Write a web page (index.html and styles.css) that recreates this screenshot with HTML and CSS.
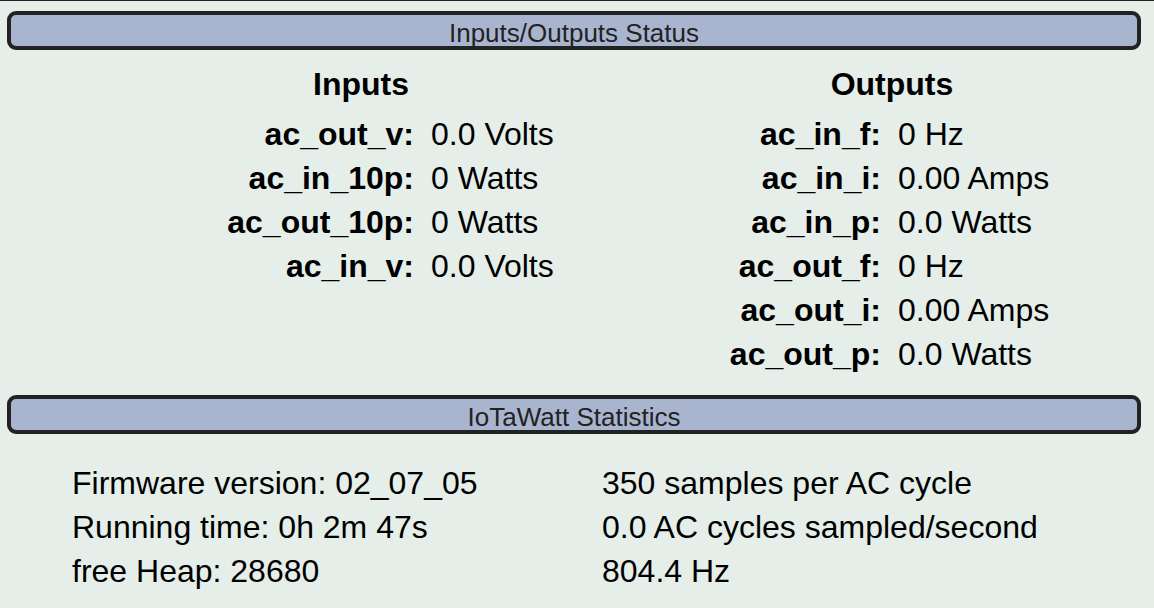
FILE: index.html
```html
<!DOCTYPE html>
<html lang="en">
<head>
  <meta charset="UTF-8">
  <title>IoTaWatt Status</title>
  <link rel="stylesheet" href="styles.css">
</head>
<body>
  <div class="bar">Inputs/Outputs Status</div>
  <div class="io">
    <div class="io-head io-head-in">Inputs</div>
    <div class="io-head io-head-out">Outputs</div>

    <div class="label c1">ac_out_v:</div><div class="value c2">0.0 Volts</div>
    <div class="label c3">ac_in_f:</div><div class="value c4">0 Hz</div>

    <div class="label c1">ac_in_10p:</div><div class="value c2">0 Watts</div>
    <div class="label c3">ac_in_i:</div><div class="value c4">0.00 Amps</div>

    <div class="label c1">ac_out_10p:</div><div class="value c2">0 Watts</div>
    <div class="label c3">ac_in_p:</div><div class="value c4">0.0 Watts</div>

    <div class="label c1">ac_in_v:</div><div class="value c2">0.0 Volts</div>
    <div class="label c3">ac_out_f:</div><div class="value c4">0 Hz</div>

    <div class="label c3">ac_out_i:</div><div class="value c4">0.00 Amps</div>

    <div class="label c3">ac_out_p:</div><div class="value c4">0.0 Watts</div>
  </div>

  <div class="bar bar-stats">IoTaWatt Statistics</div>
  <div class="stats">
    <div class="stats-col">
      <div>Firmware version: 02_07_05</div>
      <div>Running time: 0h 2m 47s</div>
      <div>free Heap: 28680</div>
    </div>
    <div class="stats-col">
      <div>350 samples per AC cycle</div>
      <div>0.0 AC cycles sampled/second</div>
      <div>804.4 Hz</div>
    </div>
  </div>
</body>
</html>
```

FILE: styles.css
```css
body {
  margin: 0;
  border-top: 1px solid #222;
  background-color: #e5eee9;
  font-family: "Liberation Sans", Arial, sans-serif;
  font-size: 32px;
  line-height: 44px;
  color: #000;
}
.bar {
  margin: 10px 13px 0 7px;
  height: 26px;
  padding-top: 5px;
  border: 4px solid #222;
  border-radius: 9px;
  background-color: #a9b5cf;
  color: #222;
  font-size: 26px;
  line-height: 26px;
  text-align: center;
}
.bar-stats {
  margin-top: 19px;
}
.io {
  display: grid;
  grid-template-columns: 431px 269px 198px 1fr;
  grid-auto-flow: row dense;
  margin-top: 12px;
}
.io-head {
  font-weight: bold;
  text-align: center;
  margin-bottom: 6px;
}
.io-head-in {
  grid-column: 1 / 3;
  grid-row: 1;
  padding-left: 22px;
}
.io-head-out {
  grid-column: 3 / 5;
  grid-row: 1;
  padding-right: 70px;
}
.label {
  font-weight: bold;
  text-align: right;
  padding-right: 17px;
}
.c1 { grid-column: 1; }
.c2 { grid-column: 2; }
.c3 { grid-column: 3; }
.c4 { grid-column: 4; }
.stats {
  display: grid;
  grid-template-columns: 530px 1fr;
  padding: 27px 0 0 72px;
}
```
